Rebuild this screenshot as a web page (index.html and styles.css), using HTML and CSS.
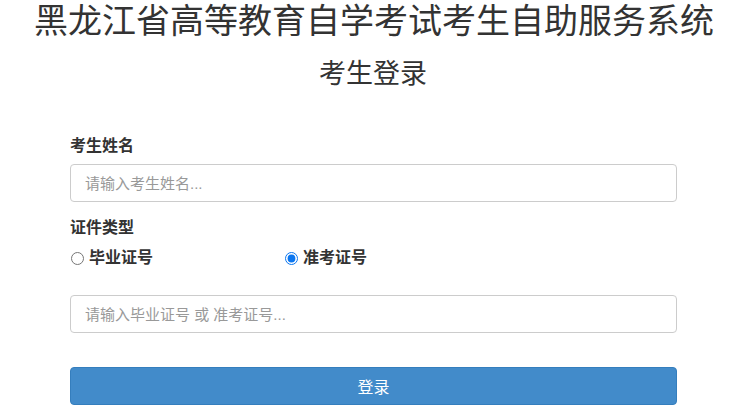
FILE: index.html
```html
<!DOCTYPE html>
<html lang="zh-CN">
<head>
<meta charset="utf-8">
<title>考生登录</title>
<link rel="stylesheet" href="styles.css">
</head>
<body>
<div class="page">
  <h1 class="title">黑龙江省高等教育自学考试考生自助服务系统</h1>
  <h2 class="subtitle">考生登录</h2>
  <form class="form">
    <label class="label" for="name">考生姓名</label>
    <input class="input" id="name" type="text" placeholder="请输入考生姓名...">
    <div class="label label-type">证件类型</div>
    <div class="radios">
      <label class="radio"><input type="radio" name="t"><span>毕业证号</span></label>
      <label class="radio"><input type="radio" name="t" checked><span>准考证号</span></label>
    </div>
    <input class="input input-no" type="text" placeholder="请输入毕业证号 或 准考证号...">
    <button class="btn" type="button">登录</button>
  </form>
</div>
</body>
</html>
```
FILE: styles.css
```css
* { box-sizing: border-box; }
html, body { margin: 0; padding: 0; background: #fff; }
body {
  font-family: "Liberation Sans", Arial, "Noto Sans CJK SC", sans-serif;
  color: #333;
}
.page { width: 742px; }
.title {
  margin: 0;
  font-size: 34px;
  line-height: 42px;
  font-weight: normal;
  text-align: center;
  color: #333;
  padding-left: 6px;
}
.subtitle {
  margin: 17px 0 0;
  font-size: 27px;
  line-height: 30px;
  font-weight: normal;
  text-align: center;
  color: #333;
  padding-left: 4px;
}
.form {
  width: 607px;
  margin: 47px 0 0 70px;
  display: flex;
  flex-direction: column;
}
.label {
  display: block;
  font-size: 16px;
  line-height: 20px;
  font-weight: bold;
  color: #333;
}
.input {
  margin-top: 8px;
  height: 38px;
  border: 1px solid #ccc;
  border-radius: 4px;
  padding: 0 14px;
  font-family: inherit;
  font-size: 15px;
  color: #555;
  outline: none;
}
.input::placeholder { color: #999; }
.label-type { margin-top: 16px; }
.radios {
  margin-top: 10px;
  display: grid;
  grid-template-columns: 214px auto;
  font-size: 16px;
  line-height: 20px;
  font-weight: bold;
}
.radio { display: flex; align-items: center; gap: 5px; }
.radio input {
  margin: 0 0 0 1px;
  width: 13px;
  height: 13px;
  accent-color: #0b76ef;
}
.input-no { margin-top: 27px; }
.btn {
  margin-top: 34px;
  height: 38px;
  background: #428bca;
  border: 1px solid #357ebd;
  border-radius: 4px;
  color: #fff;
  font-family: inherit;
  font-size: 16px;
  padding: 0;
}
```
